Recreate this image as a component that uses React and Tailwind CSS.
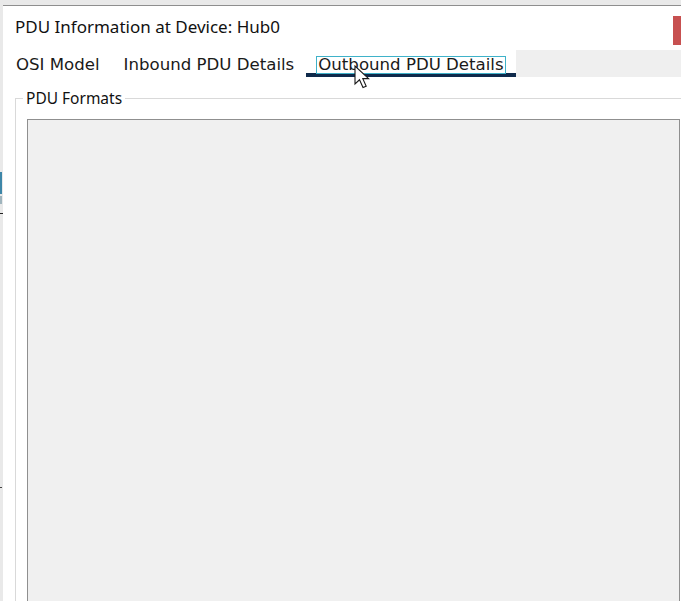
import React from 'react';

const tabs = [
  { label: 'OSI Model' },
  { label: 'Inbound PDU Details' },
  { label: 'Outbound PDU Details', active: true },
];

function Cursor() {
  return (
    <svg className="absolute left-[354px] top-[65px]" width="22" height="26" viewBox="0 0 22 26">
      <path
        d="M1 1 L1 19 L5.5 14.8 L9 22.6 L12.2 21.2 L8.8 13.6 L14.6 13.6 Z"
        fill="#ffffff"
        stroke="#1a1a1a"
        strokeWidth="1.1"
        strokeLinejoin="miter"
      />
    </svg>
  );
}

export default function App() {
  return (
    <div className="relative w-[681px] h-[601px] overflow-hidden bg-[#e9e9e9]">
      {/* bits of the app behind the dialog */}
      <div className="absolute left-0 top-[172px] w-[2px] h-[22px] bg-[#3d86a8]" />
      <div className="absolute left-0 top-[196px] w-[2px] h-[8px] bg-[#9fb4bd]" />
      <div className="absolute left-0 top-[213px] w-[3px] h-[1px] bg-[#222]" />
      <div className="absolute left-0 top-[487px] w-[2px] h-[1px] bg-[#444]" />

      <div className="absolute left-[3px] top-[5px] w-[690px] h-[600px] bg-white border-t border-[#8e8e8e] flex flex-col">
        {/* title */}
        <div className="flex items-start h-[44px]">
          <div className="pl-[12px] pt-[10px] text-[17px] leading-[22px] text-[#111] font-['Noto_Sans',sans-serif]">
            PDU Information at Device: Hub0
          </div>
          <div className="ml-auto mr-[12px] mt-[10px] w-[8px] h-[29px] bg-[#c75050]" />
        </div>

        {/* tabs */}
        <div className="flex h-[27px] font-['DejaVu_Sans',sans-serif] text-[16.6px] text-[#1a1a1a]">
          <div className="pl-[1px] flex">
            {tabs.map((t) => (
              <div
                key={t.label}
                className={`flex items-center pl-[11px] pr-[11px] h-[27px] ${t.active ? 'border-b-4 border-[#0f2a4b] pt-[6px]' : 'pt-[3px]'}`}
              >
                <span
                  className={`leading-[16px] px-[1px] ${t.active ? 'outline outline-1 outline-[#3fb2c9] outline-offset-0' : ''}`}
                >
                  {t.label}
                </span>
              </div>
            ))}
          </div>
          <div className="flex-1 bg-[#efefef]" />
        </div>

        {/* group box */}
        <div className="relative mt-[21px] ml-[12px] flex-1 border-l border-t border-[#d9d9d9] pl-[11px] pt-[20px]">
          <div className="absolute left-[7px] top-[-11px] px-[3px] bg-white text-[15.5px] leading-[20px] text-[#111] font-['Noto_Sans',sans-serif]">
            PDU Formats
          </div>
          <div className="h-full w-[653px] bg-[#f0f0f0] border-t border-l border-r border-[#8f8f8f]" />
        </div>
      </div>

      <Cursor />
    </div>
  );
}
